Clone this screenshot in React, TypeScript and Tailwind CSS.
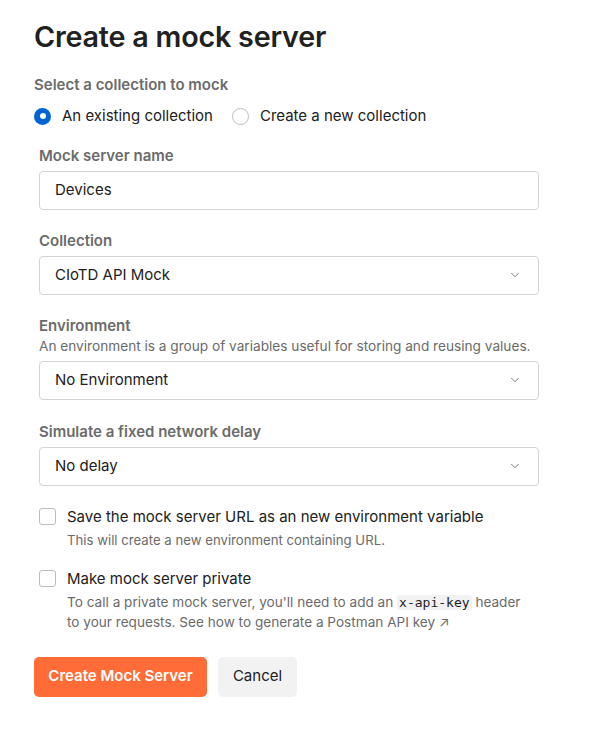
import { ChevronDown } from "lucide-react";

const fieldBox =
  "flex h-[39px] w-[500px] items-center justify-between rounded-[4px] border border-[#d4d4d4] bg-white pl-[15px] pr-[16px] text-[15px] text-[#212121]";

function Label({ children }: { children: string }) {
  return (
    <div className="text-[15px] font-semibold leading-[20px] text-[#6b6b6b]">
      {children}
    </div>
  );
}

function Select({ value }: { value: string }) {
  return (
    <div className={fieldBox}>
      <span>{value}</span>
      <ChevronDown size={14} strokeWidth={1.5} className="text-[#6b6b6b]" />
    </div>
  );
}

function Checkbox({
  label,
  descClass,
  children,
}: {
  label: string;
  descClass: string;
  children: React.ReactNode;
}) {
  return (
    <div className="flex gap-[11px]">
      <div className="size-[17px] shrink-0 rounded-[3px] border border-[#bdbdbd] bg-white" />
      <div>
        <div className="text-[15px] leading-[18px] text-[#212121]">{label}</div>
        <div className={`mt-[4px] leading-[20px] text-[#6b6b6b] ${descClass}`}>
          {children}
        </div>
      </div>
    </div>
  );
}

export default function App() {
  return (
    <div
      className="min-h-screen bg-white pl-[34px] pt-[18px]"
      style={{ fontFamily: "Inter, 'Noto Sans', sans-serif" }}
    >
      <h1 className="text-[28.7px] font-semibold leading-[38px] tracking-[-0.2px] text-[#212121]">
        Create a mock server
      </h1>

      <div className="mt-[19px]">
        <Label>Select a collection to mock</Label>
        <div className="mt-[10px] flex items-center text-[15px] text-[#212121]">
          <div className="flex items-center gap-[11px]">
            <div className="grid size-[17px] place-items-center rounded-full bg-[#0265d2]">
              <div className="size-[6px] rounded-full bg-white" />
            </div>
            <span>An existing collection</span>
          </div>
          <div className="ml-[19px] flex items-center gap-[11px]">
            <div className="size-[17px] rounded-full border border-[#bdbdbd]" />
            <span>Create a new collection</span>
          </div>
        </div>
      </div>

      <div className="pl-[5px]">
        <div className="mt-[18px]">
          <Label>Mock server name</Label>
          <div className={`${fieldBox} mt-[5px]`}>
            <span>Devices</span>
          </div>
        </div>

        <div className="mt-[21px]">
          <Label>Collection</Label>
          <div className="mt-[5px]">
            <Select value="CIoTD API Mock" />
          </div>
        </div>

        <div className="mt-[21px]">
          <Label>Environment</Label>
          <div className="text-[13.65px] leading-[20px] text-[#6b6b6b]">
            An environment is a group of variables useful for storing and reusing values.
          </div>
          <div className="mt-[5px]">
            <Select value="No Environment" />
          </div>
        </div>

        <div className="mt-[22px]">
          <Label>Simulate a fixed network delay</Label>
          <div className="mt-[5px]">
            <Select value="No delay" />
          </div>
        </div>

        <div className="mt-[22px]">
          <Checkbox
            label="Save the mock server URL as an new environment variable"
            descClass="text-[13.2px]"
          >
            This will create a new environment containing URL.
          </Checkbox>
        </div>

        <div className="mt-[20px]">
          <Checkbox label="Make mock server private" descClass="text-[13.6px]">
            To call a private mock server, you'll need to add an{" "}
            <code className="rounded-[3px] bg-[#f2f2f2] px-[2px] font-['DejaVu_Sans_Mono',monospace] text-[13px] leading-[16px] text-[#212121]">
              x-api-key
            </code>{" "}
            header
            <br />
            to your requests. See how to generate a Postman API key ↗
          </Checkbox>
        </div>
      </div>

      <div className="mt-[25px] flex gap-[11px]">
        <button className="h-[40px] w-[173px] rounded-[5px] bg-[#ff6c37] text-[15px] font-semibold text-white">
          Create Mock Server
        </button>
        <button className="h-[40px] w-[79px] rounded-[5px] bg-[#f2f2f2] text-[15px] text-[#212121]">
          Cancel
        </button>
      </div>
    </div>
  );
}
